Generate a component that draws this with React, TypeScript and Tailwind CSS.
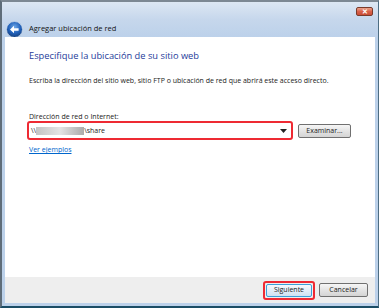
function BackIcon() {
  return (
    <svg width="17" height="17" viewBox="0 0 17 17">
      <defs>
        <radialGradient id="bk" cx="50%" cy="35%" r="65%">
          <stop offset="0%" stopColor="#6fa8e8" />
          <stop offset="60%" stopColor="#1f5fb8" />
          <stop offset="100%" stopColor="#163f7c" />
        </radialGradient>
      </defs>
      <circle cx="8.5" cy="8.5" r="8" fill="url(#bk)" stroke="#c9d8ea" strokeWidth="0.8" />
      <path d="M4 8.5 L8 4.8 V7.2 H12.6 V9.8 H8 V12.2 Z" fill="#fff" />
    </svg>
  )
}

function WinButton({ label, width }: { label: string; width: string }) {
  return (
    <div
      className={`${width} h-[14px] flex items-center justify-center rounded-[2px] border border-[#707070] bg-gradient-to-b from-[#f6f6f6] via-[#e4e4e4] to-[#d4d4d4] text-[7px] text-[#1a1a1a]`}
    >
      {label}
    </div>
  )
}

export default function App() {
  return (
    <div
      className="w-[379px] h-[308px] flex flex-col bg-[#bcd1ea] border-l-2 border-t-2 border-r border-b-2 border-l-[#5f6d79] border-t-[#7d8893] border-r-[#4d6d83] border-b-[#1b4d66] overflow-hidden"
      style={{ fontFamily: '"Open Sans", "Liberation Sans", sans-serif' }}
    >
      {/* title bar */}
      <div className="h-[35px] flex items-start bg-gradient-to-b from-[#dde7f3] via-[#c6d7ec] to-[#bcd1ea] pl-[4px] pr-[5px]">
        <div className="mt-[19px]">
          <BackIcon />
        </div>
        <div className="mt-[21px] ml-[6px] text-[7.5px] text-[#111]">Agregar ubicación de red</div>
        <div className="ml-auto mt-[5px] w-[17px] h-[9px] rounded-[2px] border border-[#7a3a2a] bg-gradient-to-b from-[#e9a28c] via-[#d9614a] to-[#c94d36] flex items-center justify-center">
          <span className="text-[7px] leading-none font-bold text-white">✕</span>
        </div>
      </div>

      {/* body */}
      <div className="flex-1 flex flex-col mx-[3px] mb-[3px] bg-white">
        <div className="flex-1 flex flex-col pl-[24px] pr-[8px]">
          <div className="mt-[14px] text-[9.3px] text-[#1e3b9a] leading-none">
            Especifique la ubicación de su sitio web
          </div>
          <div className="mt-[17px] text-[7px] text-[#1a1a1a] leading-none">
            Escriba la dirección del sitio web, sitio FTP o ubicación de red que abrirá este acceso directo.
          </div>
          <div className="mt-[29px] text-[7px] text-[#1a1a1a] leading-none">Dirección de red o Internet:</div>
          <div className="mt-[1px] flex items-center">
            <div className="w-[266px] h-[19px] -ml-[2px] rounded-[3px] border-2 border-[#ee2a33] flex items-center pl-[2px] pr-[4px]">
              <div className="flex-1 flex items-center text-[7px] text-[#1a1a1a]">
                <span>\\</span>
                <span className="inline-block w-[48px] h-[8px] bg-gradient-to-r from-[#c4c4c4] via-[#e4e4e4] to-[#ababab]" />
                <span>\share</span>
              </div>
              <svg width="7" height="4" viewBox="0 0 7 4">
                <path d="M0 0 H7 L3.5 4 Z" fill="#222" />
              </svg>
            </div>
            <div className="ml-[5px]">
              <WinButton label="Examinar..." width="w-[53px]" />
            </div>
          </div>
          <div className="mt-[6px] text-[7px] text-[#0066cc] underline leading-none">Ver ejemplos</div>
        </div>

        {/* footer */}
        <div className="h-[26px] bg-[#eeeeee] flex items-center justify-end pr-[7px] gap-[4px]">
          <div className="p-[1px] rounded-[3px] border-2 border-[#ee2a33]">
            <div className="w-[46px] h-[13px] flex items-center justify-center rounded-[2px] border border-[#3c9fd8] bg-gradient-to-b from-[#f4f9fd] via-[#e3eef8] to-[#cfe2f2] text-[7px] text-[#1a1a1a]">
              Siguiente
            </div>
          </div>
          <WinButton label="Cancelar" width="w-[49px]" />
        </div>
      </div>
    </div>
  )
}
